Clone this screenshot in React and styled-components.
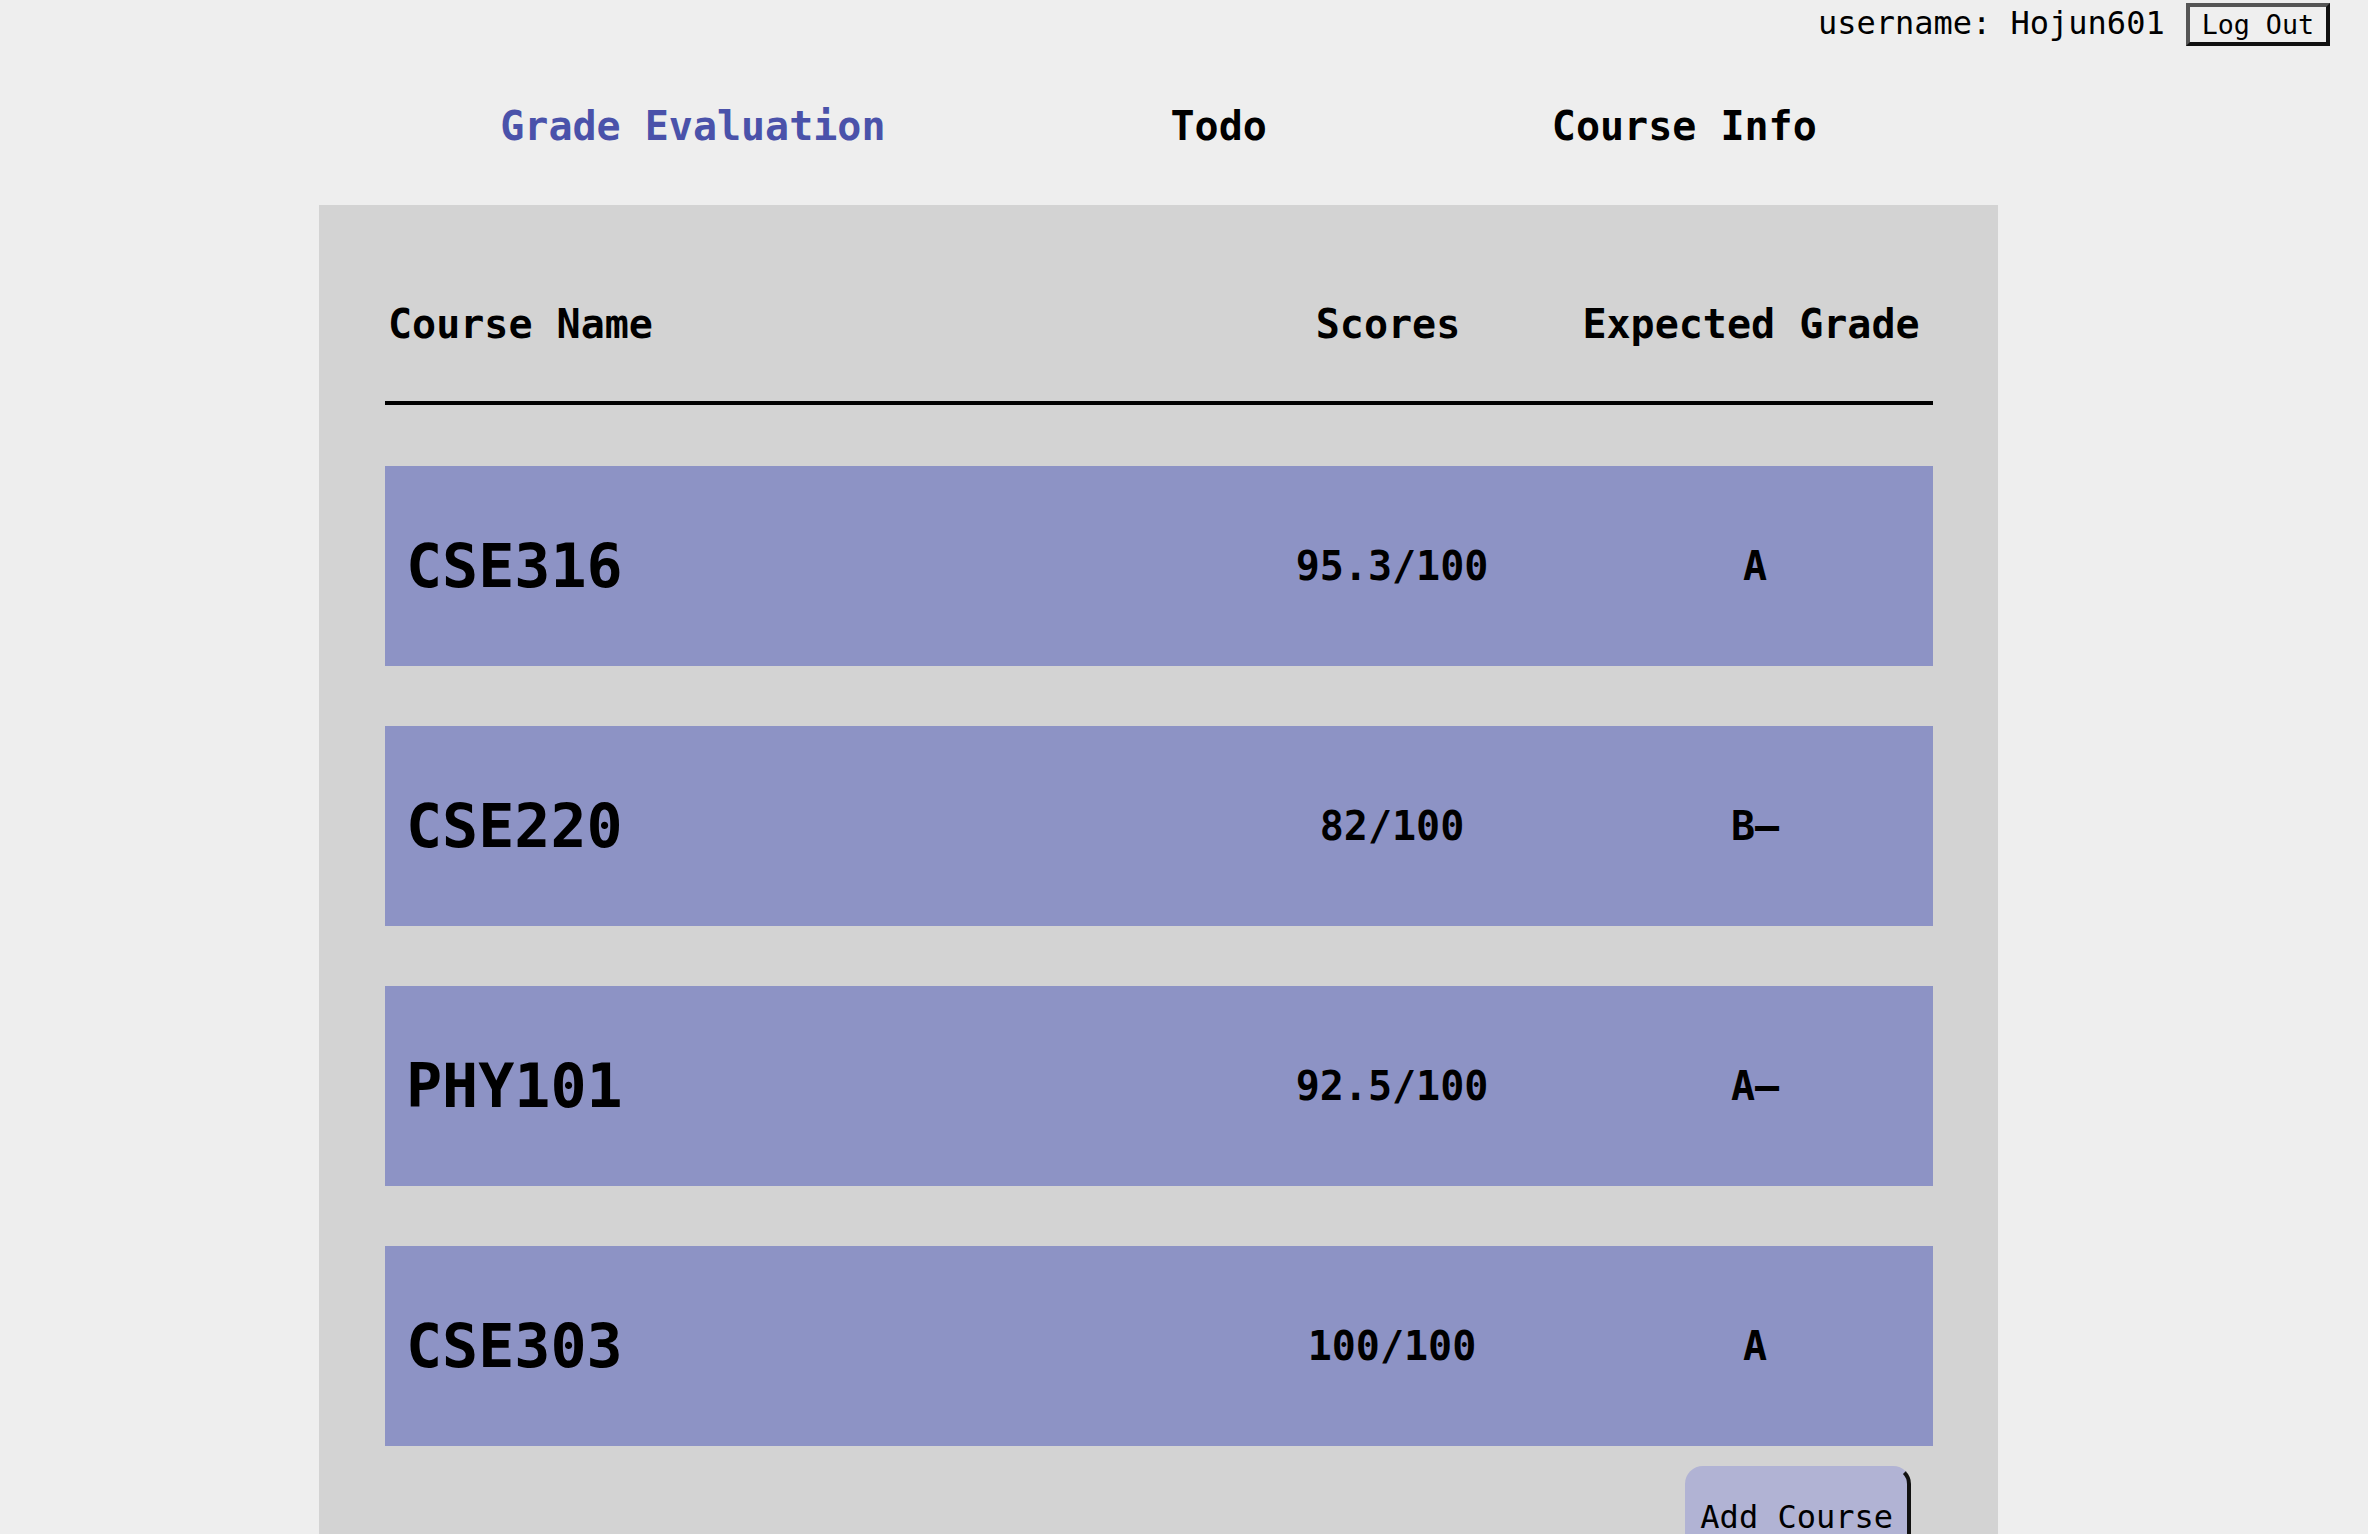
import React from "react";
import styled, { createGlobalStyle } from "styled-components";

const GlobalStyle = createGlobalStyle`
  html, body {
    margin: 0;
    padding: 0;
    overflow: hidden;
    background: #eeeeee;
    font-family: "DejaVu Sans Mono", "Liberation Mono", monospace;
    color: #000;
  }
`;

const Page = styled.div`
  min-height: 1534px;
  display: flex;
  flex-direction: column;
`;

const TopBar = styled.div`
  display: flex;
  justify-content: flex-end;
  align-items: baseline;
  gap: 21px;
  padding: 3px 38px 0 0;
`;

const UserName = styled.span`
  font-size: 32px;
`;

const LogOutButton = styled.button`
  font-family: "DejaVu Sans Mono", "Liberation Mono", monospace;
  font-size: 26.67px;
  line-height: normal;
  padding: 2px 12px;
  background: #efefef;
  color: #000;
  border: 4px solid;
  border-color: #555 #111 #111 #555;
  border-radius: 0;
`;

const Main = styled.div`
  margin-left: 319px;
  width: 1679px;
  display: flex;
  flex-direction: column;
  flex: 1;
`;

const Nav = styled.nav`
  display: flex;
  justify-content: center;
  gap: 285px;
  padding: 57px 0 56px 0;
`;

const NavItem = styled.a`
  font-size: 40px;
  font-weight: bold;
  line-height: normal;
  color: ${(p) => (p.$active ? "#4a52aa" : "#000")};
  text-decoration: none;
  cursor: pointer;
`;

const Panel = styled.section`
  flex: 1;
  background: #d3d3d3;
  padding: 0 65px 0 66px;
  display: flex;
  flex-direction: column;
`;

const HeaderRow = styled.div`
  display: grid;
  grid-template-columns: 1fr 370px 356px;
  padding: 96px 4px 54px 3px;
  border-bottom: 4px solid #000;
  font-size: 40px;
  font-weight: bold;
  line-height: normal;
`;

const HeaderCell = styled.div`
  text-align: ${(p) => (p.$left ? "left" : "center")};
`;

const CourseList = styled.div`
  display: flex;
  flex-direction: column;
  gap: 60px;
  margin-top: 61px;
`;

const CourseRow = styled.div`
  height: 200px;
  background: #8d93c5;
  display: grid;
  grid-template-columns: 1fr 370px 356px;
  align-items: center;
`;

const CourseName = styled.div`
  font-size: 60px;
  font-weight: bold;
  padding-left: 21px;
`;

const CourseValue = styled.div`
  font-size: 40px;
  font-weight: bold;
  text-align: center;
`;

const Actions = styled.div`
  display: flex;
  justify-content: flex-end;
  padding: 20px 22px 0 0;
`;

const AddButton = styled.button`
  font-family: "DejaVu Sans Mono", "Liberation Mono", monospace;
  font-size: 32px;
  line-height: normal;
  color: #000;
  background: #b1b3d4;
  padding: 28px 14px 30px 11px;
  border: 4px solid;
  border-color: transparent #111 #111 transparent;
  border-radius: 18px;
`;

const courses = [
  { name: "CSE316", score: "95.3/100", grade: "A" },
  { name: "CSE220", score: "82/100", grade: "B–" },
  { name: "PHY101", score: "92.5/100", grade: "A–" },
  { name: "CSE303", score: "100/100", grade: "A" },
];

export default function App() {
  return (
    <>
      <GlobalStyle />
      <Page>
        <TopBar>
          <UserName>username: Hojun601</UserName>
          <LogOutButton>Log Out</LogOutButton>
        </TopBar>
        <Main>
          <Nav>
            <NavItem $active>Grade Evaluation</NavItem>
            <NavItem>Todo</NavItem>
            <NavItem>Course Info</NavItem>
          </Nav>
          <Panel>
            <HeaderRow>
              <HeaderCell $left>Course Name</HeaderCell>
              <HeaderCell>Scores</HeaderCell>
              <HeaderCell>Expected Grade</HeaderCell>
            </HeaderRow>
            <CourseList>
              {courses.map((c) => (
                <CourseRow key={c.name}>
                  <CourseName>{c.name}</CourseName>
                  <CourseValue>{c.score}</CourseValue>
                  <CourseValue>{c.grade}</CourseValue>
                </CourseRow>
              ))}
            </CourseList>
            <Actions>
              <AddButton>Add Course</AddButton>
            </Actions>
          </Panel>
        </Main>
      </Page>
    </>
  );
}
